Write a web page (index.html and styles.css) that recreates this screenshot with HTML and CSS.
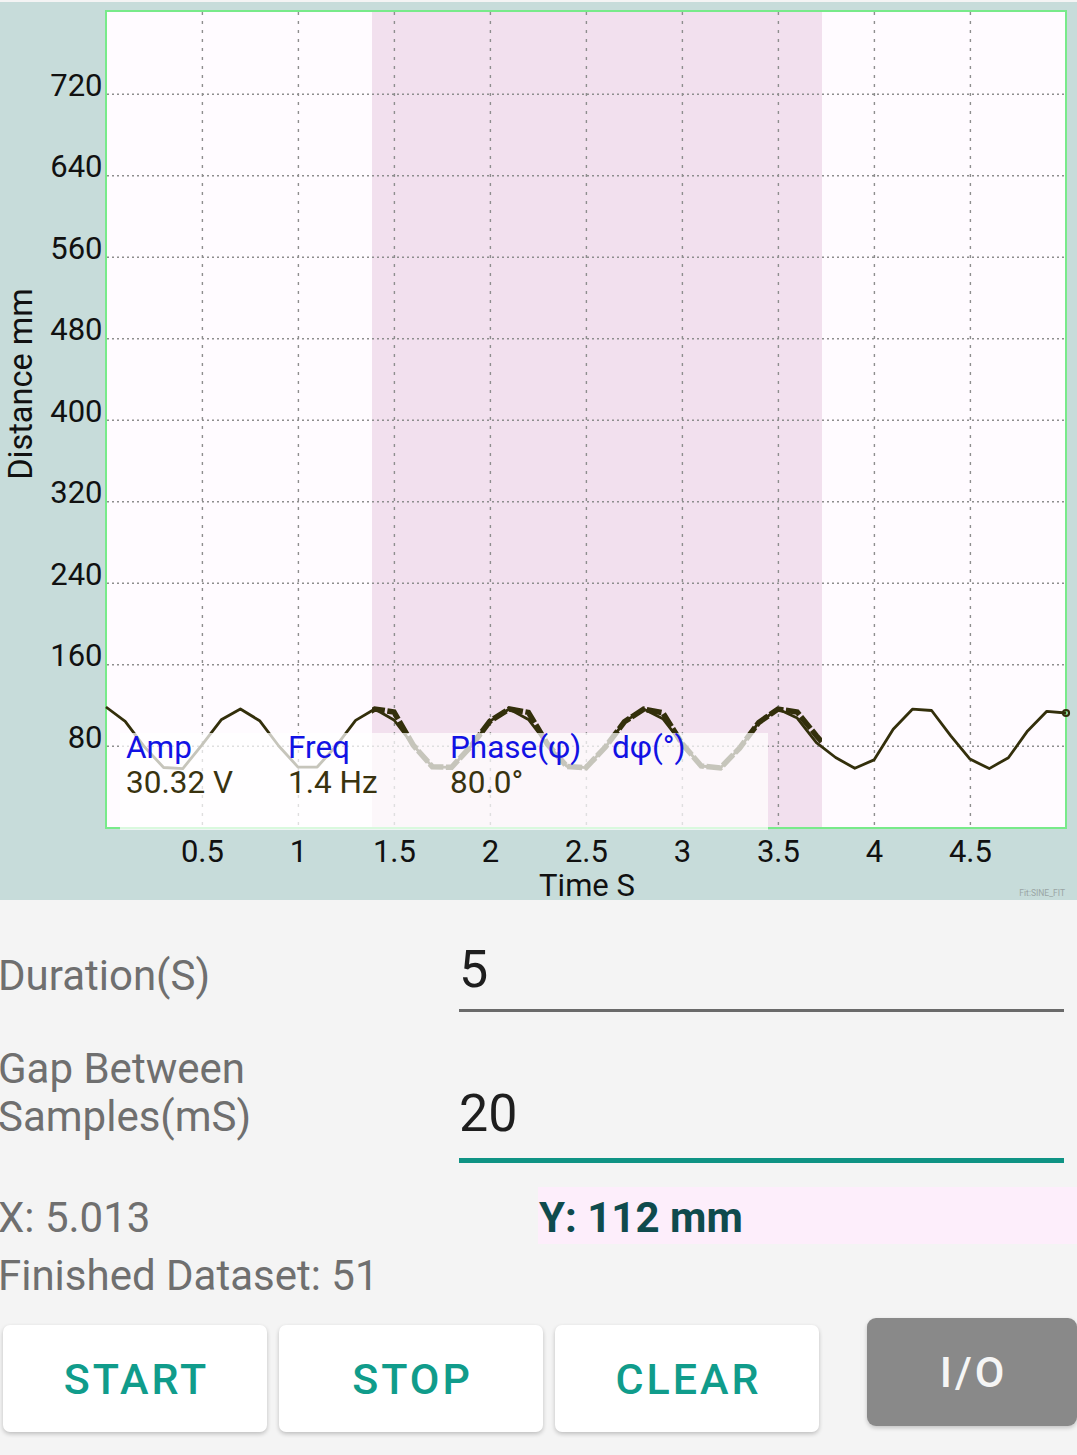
FILE: index.html
```html
<!DOCTYPE html>
<html lang="en">
<head>
<meta charset="utf-8">
<title>Distance plot</title>
<link rel="stylesheet" href="styles.css">
</head>
<body>
<div class="chart">
  <svg class="plot" width="1077" height="906" viewBox="0 2 1077 906" xmlns="http://www.w3.org/2000/svg">
    <defs>
      <clipPath id="bandclip"><rect x="372" y="600" width="450" height="240"/></clipPath>
    </defs>
    <rect class="plot-bg" x="107" y="12" width="958" height="816"/>
    <rect class="band" x="372" y="12" width="450" height="816"/>
    <g class="grid-v">
      <line x1="202.4" y1="12" x2="202.4" y2="830"/>
      <line x1="298.4" y1="12" x2="298.4" y2="830"/>
      <line x1="394.4" y1="12" x2="394.4" y2="830"/>
      <line x1="490.4" y1="12" x2="490.4" y2="830"/>
      <line x1="586.4" y1="12" x2="586.4" y2="830"/>
      <line x1="682.4" y1="12" x2="682.4" y2="830"/>
      <line x1="778.4" y1="12" x2="778.4" y2="830"/>
      <line x1="874.4" y1="12" x2="874.4" y2="830"/>
      <line x1="970.4" y1="12" x2="970.4" y2="830"/>
    </g>
    <g class="grid-h">
      <line x1="107" y1="94.3" x2="1065" y2="94.3"/>
      <line x1="107" y1="175.8" x2="1065" y2="175.8"/>
      <line x1="107" y1="257.3" x2="1065" y2="257.3"/>
      <line x1="107" y1="338.8" x2="1065" y2="338.8"/>
      <line x1="107" y1="420.3" x2="1065" y2="420.3"/>
      <line x1="107" y1="501.8" x2="1065" y2="501.8"/>
      <line x1="107" y1="583.3" x2="1065" y2="583.3"/>
      <line x1="107" y1="664.8" x2="1065" y2="664.8"/>
      <line x1="107" y1="746.3" x2="1065" y2="746.3"/>
    </g>
    <rect class="frame" x="106" y="11" width="960" height="817"/>
    <polyline class="series" points="106,707 125.2,721.3 144.4,746.8 163.6,767.5 182.8,768.6 202,744.9 221.2,719.8 240.4,709 259.6,720.7 278.8,746 298,767.1 317.2,767 336.4,745.7 355.6,720.4 374.8,709 394,720 413.2,745.2 432.4,766.8 451.6,767.3 470.8,746.5 490,721.1 509.2,709 528.4,719.4 547.6,744.4 566.8,766.4 586,767.7 605.2,747.3 624.4,721.8 643.6,709.1 662.8,718.7 682,743.5 701.2,766 720.4,768 739.6,748.1 758.8,722.4 778,709.1 797.2,718.1 816.4,742.7 835.6,757.5 854.8,768.3 874,759.9 893.2,729.2 912.4,709.2 931.6,710.5 950.8,735.9 970,759.1 989.2,768.6 1008.4,757.7 1027.6,730.9 1046.8,711.3 1066,713"/>
    <polyline class="fit" clip-path="url(#bandclip)" points="355.6,720.4 374.8,709 394,712 413.2,745.2 432.4,766.8 451.6,767.3 470.8,746.5 490,721.1 509.2,709 528.4,712.4 547.6,744.4 566.8,766.4 586,767.7 605.2,747.3 624.4,721.8 643.6,709.1 662.8,712.7 682,743.5 701.2,766 720.4,768 739.6,748.1 758.8,722.4 778,709.1 797.2,712.1 816.4,735.7 835.6,757.5"/>
    <circle class="marker" cx="1066" cy="713" r="3"/>
    <rect class="legend-bg" x="120" y="733" width="648" height="97"/>
    <text class="legend-key" x="126" y="758">Amp</text>
    <text class="legend-val" x="126" y="793">30.32 V</text>
    <text class="legend-key" x="288" y="758">Freq</text>
    <text class="legend-val" x="288" y="793">1.4 Hz</text>
    <text class="legend-key" x="450" y="758">Phase(φ)</text>
    <text class="legend-val" x="450" y="793">80.0°</text>
    <text class="legend-key" x="612" y="758">dφ(°)</text>
    <g class="y-ticks">
      <text x="102.5" y="95.5">720</text>
      <text x="102.5" y="177">640</text>
      <text x="102.5" y="258.5">560</text>
      <text x="102.5" y="340">480</text>
      <text x="102.5" y="421.5">400</text>
      <text x="102.5" y="503">320</text>
      <text x="102.5" y="584.5">240</text>
      <text x="102.5" y="666">160</text>
      <text x="102.5" y="747.5">80</text>
    </g>
    <g class="x-ticks">
      <text x="202.4" y="861.5">0.5</text>
      <text x="298.4" y="861.5">1</text>
      <text x="394.4" y="861.5">1.5</text>
      <text x="490.4" y="861.5">2</text>
      <text x="586.4" y="861.5">2.5</text>
      <text x="682.4" y="861.5">3</text>
      <text x="778.4" y="861.5">3.5</text>
      <text x="874.4" y="861.5">4</text>
      <text x="970.4" y="861.5">4.5</text>
    </g>
    <text class="axis-title" x="587" y="895.5">Time S</text>
    <text class="axis-title axis-title--y" transform="translate(32 384) rotate(-90)">Distance mm</text>
    <text class="fit-tag" x="1065" y="896">Fit:SINE_FIT</text>
  </svg>
</div>

<main class="form">
  <div class="field field--duration">
    <div class="field-label">Duration(S)</div>
    <div class="field-input">5</div>
  </div>
  <div class="field field--gap">
    <div class="field-label">Gap Between<br>Samples(mS)</div>
    <div class="field-input">20</div>
  </div>
  <div class="readout">
    <div class="readout-x">X: 5.013</div>
    <div class="readout-y">Y: 112 mm</div>
  </div>
  <div class="finished">Finished Dataset: 51</div>
  <div class="buttons">
    <button class="btn">START</button>
    <button class="btn">STOP</button>
    <button class="btn">CLEAR</button>
    <button class="btn btn--io">I/O</button>
  </div>
</main>
</body>
</html>
```

FILE: styles.css
```css
* { box-sizing: border-box; }
html, body { margin: 0; padding: 0; }
body {
  background: #f4f4f4;
  font-family: Roboto, "Liberation Sans", sans-serif;
  width: 1077px;
  height: 1455px;
  overflow: hidden;
}

/* ---------- chart ---------- */
.chart {
  margin-top: 2px;
  height: 898px;
  background: #c7dcda;
}
.plot { display: block; overflow: visible; }
.plot-bg { fill: #fffbff; }
.band { fill: #f2e0ee; }
.grid-v line {
  stroke: #8e8e8e;
  stroke-width: 1.4;
  stroke-dasharray: 3 6;
}
.grid-h line {
  stroke: #8e8e8e;
  stroke-width: 1.4;
  stroke-dasharray: 2 3;
}
.frame {
  fill: none;
  stroke: #78ea8a;
  stroke-width: 2;
}
.series {
  fill: none;
  stroke: #332f0b;
  stroke-width: 2.8;
  stroke-linejoin: round;
}
.fit {
  fill: none;
  stroke: #332f0b;
  stroke-width: 5.5;
  stroke-dasharray: 15 2.5;
}
.marker {
  fill: none;
  stroke: #332f0b;
  stroke-width: 2.2;
}
.legend-bg { fill: #ffffff; fill-opacity: 0.72; }
.legend-key {
  font-family: Roboto, "Liberation Sans", sans-serif;
  font-size: 31.5px;
  fill: #1212e4;
}
.legend-val {
  font-family: Roboto, "Liberation Sans", sans-serif;
  font-size: 31.5px;
  fill: #39330f;
}
.y-ticks text {
  font-family: Roboto, "Liberation Sans", sans-serif;
  font-size: 31px;
  fill: #111111;
  text-anchor: end;
}
.x-ticks text {
  font-family: Roboto, "Liberation Sans", sans-serif;
  font-size: 31px;
  fill: #111111;
  text-anchor: middle;
}
.axis-title {
  font-family: Roboto, "Liberation Sans", sans-serif;
  font-size: 31px;
  fill: #111111;
  text-anchor: middle;
}
.axis-title--y { font-size: 32.5px; }
.fit-tag {
  font-family: Roboto, "Liberation Sans", sans-serif;
  font-size: 8.5px;
  fill: #9aa5a4;
  text-anchor: end;
}

/* ---------- form ---------- */
.field {
  display: flex;
  align-items: flex-start;
  padding-right: 13px;
}
.field-label {
  width: 461px;
  flex: none;
  margin-left: -2px;
  font-size: 42px;
  line-height: 48px;
  color: #6f6f6f;
}
.field-input {
  flex: 1;
  font-size: 52px;
  line-height: 60px;
  color: #1e1e1e;
}
.field--duration { padding-top: 40px; }
.field--duration .field-label { margin-top: 12px; }
.field--duration .field-input {
  padding-bottom: 9px;
  border-bottom: 3px solid #6a6a6a;
}
.field--gap { padding-top: 33px; }
.field--gap .field-input {
  margin-top: 39px;
  padding-bottom: 14px;
  border-bottom: 5px solid #0f9384;
}

.readout {
  display: flex;
  align-items: baseline;
  margin-top: 24px;
}
.readout-x {
  width: 540px;
  flex: none;
  margin-left: -2px;
  font-size: 42px;
  line-height: 48px;
  color: #6f6f6f;
}
.readout-y {
  flex: 1;
  padding: 7px 0 2px 1px;
  background: #fdeefb;
  font-size: 42px;
  line-height: 48px;
  font-weight: 700;
  color: #0f4b4d;
}
.finished {
  margin-top: 8px;
  margin-left: -2px;
  font-size: 42px;
  line-height: 48px;
  color: #6f6f6f;
}

/* ---------- buttons ---------- */
.buttons {
  display: flex;
  align-items: flex-start;
  gap: 12px;
  margin-top: 25px;
  padding-left: 3px;
}
.btn {
  width: 264px;
  height: 107px;
  flex: none;
  border: none;
  border-radius: 7px;
  background: #ffffff;
  box-shadow: 0 2px 4px rgba(0, 0, 0, 0.22);
  display: flex;
  align-items: center;
  justify-content: center;
  padding: 0 0 0 3px;
  font-family: Roboto, "Liberation Sans", sans-serif;
  font-size: 43px;
  font-weight: 500;
  letter-spacing: 3px;
  color: #109c8b;
}
.btn--io {
  width: 210px;
  height: 108px;
  margin-left: 36px;
  margin-top: -7px;
  border-radius: 9px;
  background: #898989;
  color: #f5f5f5;
  box-shadow: 0 2px 4px rgba(0, 0, 0, 0.2);
}
```
